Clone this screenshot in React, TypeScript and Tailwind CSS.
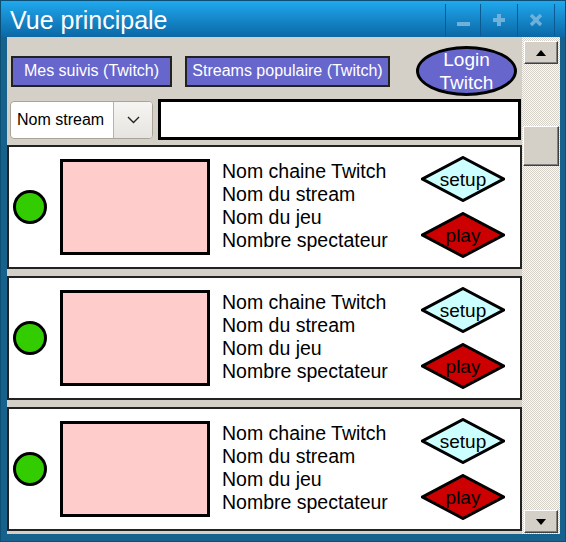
import React from "react";

const Diamond = ({ fill, label }: { fill: string; label: string }) => (
  <div className="relative w-[84px] h-[46px] flex items-center justify-center">
    <svg className="absolute inset-0" width="84" height="46" viewBox="0 0 84 46">
      <polygon points="42,1.5 82.5,23 42,44.5 1.5,23" fill={fill} stroke="#000" strokeWidth="3" />
    </svg>
    <span className="relative text-[19px] leading-none text-black">{label}</span>
  </div>
);

const Row = () => (
  <div className="h-[124px] border-2 border-[#222] bg-white flex items-center shrink-0">
    <div className="ml-[4px] w-[34px] h-[34px] rounded-full border-[3px] border-black bg-[#33cc00] shrink-0" />
    <div className="ml-[13px] w-[150px] h-[96px] border-[3px] border-black bg-[#ffcccc] shrink-0" />
    <div className="ml-[12px] mb-[2px] w-[199px] text-[19.5px] leading-[23px] text-black flex flex-col shrink-0">
      <span>Nom chaine Twitch</span>
      <span>Nom du stream</span>
      <span>Nom du jeu</span>
      <span>Nombre spectateur</span>
    </div>
    <div className="flex flex-col gap-[10px]">
      <Diamond fill="#ccffff" label="setup" />
      <Diamond fill="#cc0000" label="play" />
    </div>
  </div>
);

const ScrollBtn = ({ up }: { up?: boolean }) => (
  <div className="w-[34px] h-[23px] bg-[#d4d0c8] border border-t-white border-l-white border-r-[#404040] border-b-[#404040] shadow-[inset_-1px_-1px_0_#808080] flex items-center justify-center">
    <svg width="10" height="6" viewBox="0 0 10 6">
      {up ? <polygon points="5,0 10,6 0,6" fill="#000" /> : <polygon points="0,0 10,0 5,6" fill="#000" />}
    </svg>
  </div>
);

export default function App() {
  return (
    <div
      className="w-[566px] h-[542px] bg-[#16628c] flex flex-col border border-[#0c4f75]"
      style={{ fontFamily: '"Liberation Sans", Arial, sans-serif' }}
    >
      <div className="h-[36px] shrink-0 bg-gradient-to-b from-[#20a8ee] to-[#0b68a6] flex items-start">
        <span className="text-white text-[25px] leading-none mt-[7px] ml-[9px]">Vue principale</span>
        <div className="ml-auto mt-[3px] mr-[10px] flex">
          <div className="w-[36px] h-[32px] border-x border-[#0b5b92] flex items-center justify-center">
            <div className="w-[13px] h-[4px] bg-[#6eb1da] mt-[8px]" />
          </div>
          <div className="w-[37px] h-[32px] border-r border-[#0b5b92] flex items-center justify-center">
            <svg width="14" height="14" viewBox="0 0 14 14">
              <path d="M7 1v12M1 7h12" stroke="#6eb1da" strokeWidth="4" />
            </svg>
          </div>
          <div className="w-[37px] h-[32px] border-r border-[#0b5b92] flex items-center justify-center">
            <svg width="14" height="14" viewBox="0 0 14 14">
              <path d="M2 2l10 10M12 2L2 12" stroke="#6eb1da" strokeWidth="3.5" />
            </svg>
          </div>
        </div>
      </div>
      <div className="flex flex-1 ml-[6px] mr-[5px] mb-[7px] bg-[#d4d0c8] min-h-0">
        <div className="w-[515px] flex flex-col">
          <div className="flex items-center h-[50px] mt-[9px]">
            <div className="ml-[4px] w-[161px] h-[31px] border-2 border-[#222] bg-[#6666cc] text-white text-[16px] flex items-center justify-center">
              Mes suivis (Twitch)
            </div>
            <div className="ml-[13px] w-[205px] h-[31px] border-2 border-[#222] bg-[#6666cc] text-white text-[16px] flex items-center justify-center">
              Streams populaire (Twitch)
            </div>
            <div className="ml-[26px] w-[101px] h-[50px] rounded-[50%] border-[3px] border-black bg-[#6666cc] text-white text-[19px] leading-[23px] flex flex-col items-center justify-center">
              <span>Login</span>
              <span>Twitch</span>
            </div>
          </div>
          <div className="flex items-center h-[41px] mt-[3px]">
            <div className="ml-[3px] w-[143px] h-[38px] rounded-[4px] border border-[#aaa398] bg-white flex overflow-hidden">
              <div className="flex-1 flex items-center pl-[6px] text-[16px] text-black">Nom stream</div>
              <div className="w-[39px] border-l border-[#b8b2a8] bg-gradient-to-b from-[#f6f5f3] to-[#e6e4e0] flex items-center justify-center">
                <svg width="13" height="8" viewBox="0 0 13 8">
                  <path d="M1 1l5.5 5.5L12 1" stroke="#222" strokeWidth="1.4" fill="none" />
                </svg>
              </div>
            </div>
            <div className="ml-[5px] w-[363px] h-[41px] border-[3px] border-black bg-white" />
          </div>
          <div className="flex flex-col gap-[7px] mt-[5px]">
            <Row />
            <Row />
            <Row />
          </div>
        </div>
        <div className="w-[38px] flex flex-col items-center bg-[repeating-conic-gradient(#d4d0c8_0_25%,#fbfbfa_0_50%)] bg-[length:2px_2px]">
          <div className="mt-[4px]">
            <ScrollBtn up />
          </div>
          <div className="mt-[62px] w-[36px] h-[40px] bg-[#d4d0c8] border border-t-white border-l-white border-r-[#404040] border-b-[#404040] shadow-[inset_-1px_-1px_0_#808080]" />
          <div className="mt-auto mb-[1px]">
            <ScrollBtn />
          </div>
        </div>
      </div>
    </div>
  );
}
